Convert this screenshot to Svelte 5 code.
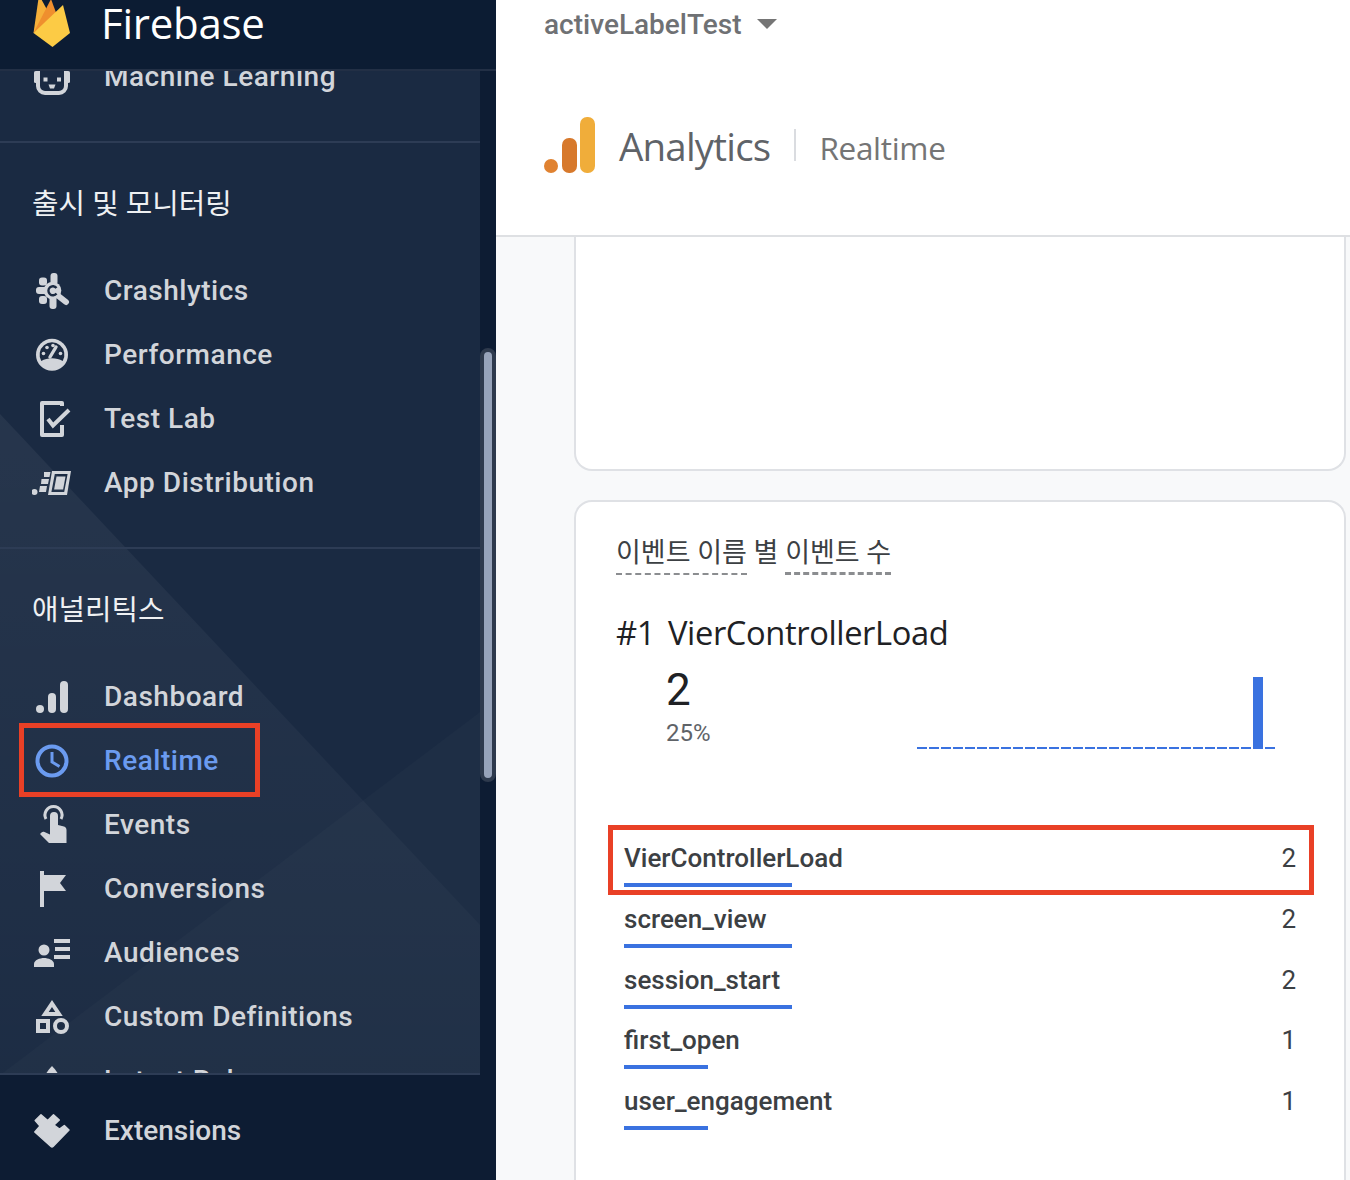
<script>
  const icons = {
    ml: `<rect x="6" y="6" width="28" height="31" rx="7" fill="none" stroke="currentColor" stroke-width="4"/><rect x="2" y="15" width="3" height="12" rx="1.500" fill="currentColor"/><rect x="35" y="15" width="3" height="12" rx="1.500" fill="currentColor"/><rect x="11.500" y="21.500" width="4" height="4" fill="currentColor"/><rect x="25" y="21.500" width="4" height="4" fill="currentColor"/><path d="M16.500 28.500h7l-1.500 4h-4z" fill="currentColor"/>`,
    crash: `<g fill="currentColor"><circle cx="20.500" cy="20.500" r="8.800"/><rect x="18.500" y="3" width="7" height="12" rx="3"/><rect x="4" y="17" width="12" height="7" rx="3"/><rect x="7" y="7.500" width="8" height="8" rx="3"/><rect x="7" y="26" width="8" height="8" rx="3"/><rect x="17.500" y="26" width="7" height="13" rx="3"/></g><path d="M27 26.500l7 5.500" stroke="currentColor" stroke-width="6" stroke-linecap="round" fill="none"/><path d="M24.500 18a4.500 4.500 0 1 0 0 5.500" stroke="#1b2a41" stroke-width="2.400" fill="none"/>`,
    perf: `<circle cx="20" cy="20.700" r="16" fill="currentColor"/><path d="M9.300 27a12.400 12.400 0 1 1 21.400 0c-6-3.600-15.400-3.600-21.400 0z" fill="#1b2a41"/><g fill="currentColor"><circle cx="11.500" cy="19.500" r="1.800"/><circle cx="15" cy="13.500" r="1.800"/><circle cx="21" cy="11.500" r="1.800"/><circle cx="28.500" cy="19.500" r="1.800"/></g><path d="M18 23l6-10" stroke="currentColor" stroke-width="3.400" stroke-linecap="round"/>`,
    lab: `<path d="M30 8V5H10V37H30V27" fill="none" stroke="currentColor" stroke-width="4" stroke-linejoin="round"/><path d="M16 21l5 6.500L37 12" fill="none" stroke="currentColor" stroke-width="4"/>`,
    dist: `<path fill-rule="evenodd" fill="currentColor" d="M20 9h19l-4 24H16zM22.800 12l-3.400 18h12.800l3.400-18z"/><path d="M24.500 14.500h9l-2.400 13h-9z" fill="currentColor"/><path d="M12 10h6.500l-1 5H12zM9.500 17h7.500l-1 5H9zM8 24h7l-1 6H7z" fill="currentColor"/><circle cx="2.500" cy="30" r="3" fill="currentColor"/>`,
    dash: `<g fill="currentColor"><circle cx="8" cy="33" r="4"/><rect x="16" y="17" width="8" height="20" rx="4"/><rect x="28" y="5" width="8" height="32" rx="4"/></g>`,
    clock: `<circle cx="20" cy="21" r="14.500" fill="none" stroke="currentColor" stroke-width="4"/><path d="M20 12V22L27.500 26.500" fill="none" stroke="currentColor" stroke-width="3"/>`,
    touch: `<path d="M14 15a8.500 8.500 0 1 1 15 0" fill="none" stroke="currentColor" stroke-width="3"/><path fill="currentColor" d="M18 12a4 4 0 0 1 8 0v9l6 1.500c1.500.500 2.500 1.500 2.500 3.500v13H17L8 30l1.500-1.500c1-1 2-1 3-.500l5.500 2.500z"/>`,
    flag: `<rect x="8" y="3" width="4" height="36" fill="currentColor"/><path d="M12 7h22l-6 8 6 8H12z" fill="currentColor"/>`,
    aud: `<g fill="currentColor"><circle cx="12" cy="18" r="5.500"/><path d="M2 35v-3c0-4 6-6 10-6s10 2 10 6v3z"/><rect x="22" y="7" width="16" height="4"/><rect x="23" y="15" width="15" height="4"/><rect x="22" y="23" width="16" height="4"/></g>`,
    custom: `<path d="M20 7.500L27 18H13z" fill="none" stroke="currentColor" stroke-width="4"/><rect x="6" y="25" width="10" height="10" fill="none" stroke="currentColor" stroke-width="4"/><circle cx="29" cy="30" r="6" fill="none" stroke="currentColor" stroke-width="4"/>`,
    release: `<path d="M20 6c5 5 8 10 8 16v14H12V22c0-6 3-11 8-16z" fill="currentColor"/>`,
    ext: `<path fill="currentColor" stroke="currentColor" stroke-width="1.500" stroke-linejoin="round" d="M9 4.800L15.700 10.500 21.500 4.800 27.300 10 22 15 27.500 19 32.300 15.500 37 20 21 36.500Q20 37.500 19 36.500L2.800 22 8 16 3.200 10.500z"/>`
  };

  const monitoring = [
    ['crash', 'Crashlytics'],
    ['perf', 'Performance'],
    ['lab', 'Test Lab'],
    ['dist', 'App Distribution']
  ];
  const analytics = [
    ['dash', 'Dashboard'],
    ['clock', 'Realtime'],
    ['touch', 'Events'],
    ['flag', 'Conversions'],
    ['aud', 'Audiences'],
    ['custom', 'Custom Definitions'],
    ['release', 'Latest Release']
  ];
  const rows = [
    { name: 'VierControllerLoad', value: 2 },
    { name: 'screen_view', value: 2 },
    { name: 'session_start', value: 2 },
    { name: 'first_open', value: 1 },
    { name: 'user_engagement', value: 1 }
  ];
  const bars = Array.from({ length: 30 }, (_, i) => (i === 28 ? 72 : 2));
</script>

<div class="page">
  <aside class="side">
    <header class="brand">
      <svg class="flame" viewBox="0 0 40 48" width="40" height="48" aria-hidden="true">
        <path d="M1.500 33L7-5l12 22z" fill="#f6b03a" />
        <path d="M19-1l7 19L1.500 33z" fill="#ef8f2e" />
        <path d="M1.500 33L31 5l7 28-17.500 14z" fill="#fccb45" />
      </svg>
      <span class="brand-name">Firebase</span>
    </header>

    <div class="scroller">
      <svg class="decor" viewBox="0 0 480 1004" width="480" height="1004" aria-hidden="true">
        <defs>
          <linearGradient id="fade" gradientUnits="userSpaceOnUse" x1="0" y1="343" x2="0" y2="1004">
            <stop offset="0" stop-color="#fff" stop-opacity=".055" />
            <stop offset="1" stop-color="#fff" stop-opacity=".012" />
          </linearGradient>
        </defs>
        <path d="M0 343L480 854V1004H0z" fill="url(#fade)" />
        <path d="M480 641V1004H0z" fill="#fff" opacity=".02" />
      </svg>
      <div class="inner">
        <section class="group first">
          <a class="item">
            <svg class="icon" viewBox="0 0 40 40" width="40" height="40">{@html icons.ml}</svg>
            <span>Machine Learning</span>
          </a>
        </section>
        <section class="group">
          <h2>출시 및 모니터링</h2>
          {#each monitoring as [icon, label]}
            <a class="item">
              <svg class="icon" viewBox="0 0 40 40" width="40" height="40">{@html icons[icon]}</svg>
              <span>{label}</span>
            </a>
          {/each}
        </section>
        <section class="group">
          <h2>애널리틱스</h2>
          {#each analytics as [icon, label]}
            <a class="item" class:active={label === 'Realtime'}>
              <svg class="icon" viewBox="0 0 40 40" width="40" height="40">{@html icons[icon]}</svg>
              <span>{label}</span>
              {#if label === 'Realtime'}<i class="mark"></i>{/if}
            </a>
          {/each}
        </section>
      </div>
    </div>
    <div class="thumb"></div>

    <footer class="foot">
      <a class="item">
        <svg class="icon" viewBox="0 0 40 40" width="40" height="40">{@html icons.ext}</svg>
        <span>Extensions</span>
      </a>
    </footer>
  </aside>

  <main class="main">
    <div class="appbar">
      <div class="project">
        <span>activeLabelTest</span>
        <i class="caret"></i>
      </div>
      <div class="product">
        <svg class="ga" viewBox="0 0 51 56" width="51" height="56" aria-hidden="true">
          <circle cx="7" cy="49" r="7" fill="#e08231" />
          <rect x="18" y="21" width="15" height="35" rx="7" fill="#d7792c" />
          <rect x="36" y="0" width="15" height="56" rx="7" fill="#f0ad3a" />
        </svg>
        <span class="ga-name">Analytics</span>
        <i class="rule"></i>
        <span class="ga-page">Realtime</span>
      </div>
    </div>

    <div class="content">
      <div class="card blank"></div>
      <div class="card events">
        <h3><span class="dash">이벤트 이름</span> 별 <span class="dash thick">이벤트 수</span></h3>
        <div class="top">
          <span>#1</span>
          <span>VierControllerLoad</span>
        </div>
        <div class="stat">
          <div class="nums">
            <div class="big">2</div>
            <div class="pct">25%</div>
          </div>
          <svg class="spark" viewBox="0 0 358 72" width="358" height="72" aria-hidden="true">
            {#each bars as h, i}
              <rect x={i * 12} y={72 - h} width="10" height={h} fill="#3a72e0" />
            {/each}
          </svg>
        </div>
        <ul class="table">
          {#each rows as row, i}
            <li class="row">
              <div class="cell">
                <span class="rname">{row.name}</span>
                <span class="rval">{row.value}</span>
              </div>
              <i class="meter" style="width:{row.value * 84}px"></i>
              {#if i === 0}<i class="mark rowmark"></i>{/if}
            </li>
          {/each}
        </ul>
      </div>
    </div>
  </main>
</div>

<style>
  :global(body) {
    margin: 0;
    background: #f8f9fa;
  }
  * {
    box-sizing: border-box;
  }
  .page {
    display: flex;
    height: 1180px;
    overflow: hidden;
    font-family: Roboto, "Noto Sans CJK KR", sans-serif;
  }
  .side {
    position: relative;
    flex: 0 0 496px;
    display: flex;
    flex-direction: column;
    background: #0d1c33;
  }
  .brand {
    flex: 0 0 71px;
    display: flex;
    align-items: flex-start;
    gap: 29px;
    padding-left: 32px;
    border-bottom: 2px solid #222f45;
    background: #0c1c33;
    color: #fff;
  }
  .flame {
    display: block;
  }
  .brand-name {
    font-family: "Open Sans", sans-serif;
    font-size: 42px;
    line-height: 46px;
    letter-spacing: -0.25px;
  }
  .scroller {
    position: relative;
    flex: 1;
    width: 480px;
    overflow: hidden;
    background: #1a2a42;
    border-bottom: 2px solid #2d3c55;
  }
  .decor {
    position: absolute;
    left: 0;
    top: 0;
  }
  .inner {
    position: relative;
    margin-top: -27px;
  }
  .group {
    padding: 41px 0 33px;
    border-bottom: 2px solid #2d3c55;
  }
  .group.first {
    padding: 0 0 33px;
  }
  h2 {
    margin: 0 0 34px 32px;
    font-size: 28.8px;
    font-weight: 400;
    line-height: 40px;
    color: #eef0f2;
  }
  .item {
    position: relative;
    display: flex;
    align-items: center;
    height: 64px;
    padding-left: 32px;
    color: #d2d5da;
    font-size: 28px;
    letter-spacing: 0.52px;
    font-weight: 500;
  }
  .item .icon {
    flex: none;
    margin-right: 32px;
  }
  .item.active {
    color: #6b9bf0;
  }
  .mark {
    position: absolute;
    border: 5px solid #e94026;
    pointer-events: none;
  }
  .item .mark {
    left: 19px;
    top: -5px;
    width: 241px;
    height: 74px;
  }
  .thumb {
    position: absolute;
    left: 480px;
    top: 348px;
    width: 16px;
    height: 434px;
    border: 4px solid #2e3a4d;
    border-radius: 8px;
    background: #97a3b9;
  }
  .foot {
    flex: 0 0 105px;
    padding-top: 23px;
  }
  .foot .item {
    color: #d2d5da;
    letter-spacing: 0;
  }
  .main {
    flex: 1;
    min-width: 0;
    display: flex;
    flex-direction: column;
  }
  .appbar {
    flex: 0 0 237px;
    padding-left: 48px;
    background: #fff;
    border-bottom: 2px solid #dee0e3;
  }
  .project {
    display: flex;
    align-items: center;
    gap: 16px;
    height: 48px;
    color: #6f7174;
    font-size: 28px;
    font-weight: 500;
  }
  .caret {
    width: 0;
    height: 0;
    border: 10px solid transparent;
    border-top-color: #757575;
    border-bottom: 0;
  }
  .product {
    display: flex;
    align-items: center;
    margin-top: 69px;
    height: 56px;
  }
  .ga {
    flex: none;
  }
  .ga-name {
    margin: 2px 0 0 24px;
    font-family: "Open Sans", sans-serif;
    font-size: 38.5px;
    letter-spacing: -0.8px;
    color: #5f6368;
  }
  .rule {
    width: 2px;
    height: 32px;
    margin: 0 23px 0 24px;
    background: #dadce0;
  }
  .ga-page {
    margin-top: 4px;
    font-family: "Open Sans", sans-serif;
    font-size: 31.5px;
    letter-spacing: -0.3px;
    color: #757575;
  }
  .content {
    flex: 1;
    min-height: 0;
    padding: 0 4px 0 79px;
    display: flex;
    flex-direction: column;
    gap: 29px;
    background: #f8f9fa;
    overflow: hidden;
  }
  .card {
    margin-left: -1px;
    background: #fff;
    border: 2px solid #dfe1e5;
    border-radius: 18px;
  }
  .blank {
    flex: 0 0 234px;
    border-top: 0;
    border-radius: 0 0 18px 18px;
  }
  .events {
    flex: 0 0 760px;
    padding: 31px 40px 0;
  }
  h3 {
    margin: 0;
    height: 42px;
    font-size: 27px;
    font-weight: 400;
    line-height: 40px;
    color: #3c4043;
    white-space: nowrap;
  }
  .dash {
    display: inline-block;
    height: 42px;
    border-bottom: 2px dashed #8b8d90;
  }
  .dash.thick {
    border-bottom-width: 3px;
  }
  .top {
    display: flex;
    gap: 13px;
    margin-top: 36px;
    font-family: "Open Sans", sans-serif;
    font-size: 32.7px;
    line-height: 44px;
    letter-spacing: -0.4px;
    color: #202124;
  }
  .stat {
    display: flex;
    margin-top: 12px;
    padding-left: 50px;
    height: 82px;
    margin-right: -2px;
    justify-content: space-between;
  }
  .big {
    font-size: 44px;
    line-height: 46px;
    color: #202124;
  }
  .pct {
    margin-top: 6px;
    font-size: 24px;
    line-height: 28px;
    color: #5f6368;
  }
  .spark {
    display: block;
    margin: 10px 31px 0 0;
  }
  .table {
    list-style: none;
    margin: 79px 0 0;
    padding: 0 8px;
  }
  .row {
    position: relative;
    height: 60.800px;
    padding-top: 12px;
  }
  .cell {
    display: flex;
    justify-content: space-between;
    font-size: 26px;
    line-height: 36px;
    color: #3c4043;
  }
  .rname {
    font-weight: 500;
  }
  .rval {
    font-weight: 400;
  }
  .meter {
    position: absolute;
    left: 0;
    top: 55px;
    height: 4px;
    background: #3a72e0;
  }
  .rowmark {
    left: -16px;
    top: -3px;
    width: 706px;
    height: 70px;
  }
</style>
